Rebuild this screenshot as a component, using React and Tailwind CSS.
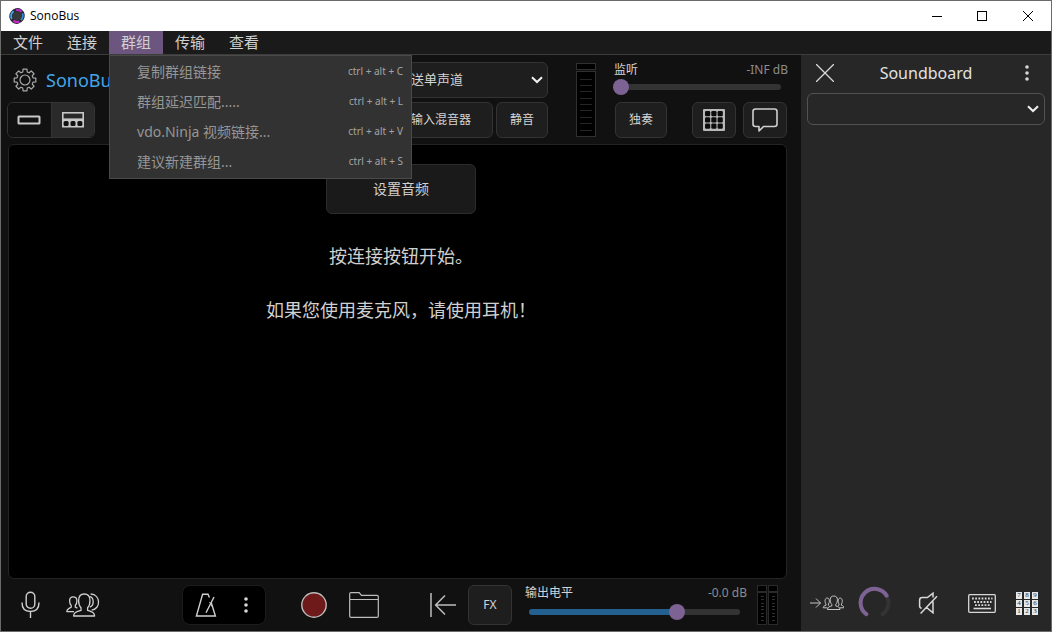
import React, { useState } from 'react';

const FONT = "font-['Noto_Sans','Noto_Sans_CJK_SC',sans-serif]";

const menus = ['文件', '连接', '群组', '传输', '查看'];

const groupItems = [
  { label: '复制群组链接', keys: 'ctrl + alt + C' },
  { label: '群组延迟匹配.....', keys: 'ctrl + alt + L' },
  { label: 'vdo.Ninja 视频链接...', keys: 'ctrl + alt + V' },
  { label: '建议新建群组...', keys: 'ctrl + alt + S' },
];

function Logo() {
  return (
    <svg width="16" height="16" viewBox="0 0 16 16" aria-hidden="true">
      <ellipse cx="8" cy="8" rx="7.6" ry="8" transform="rotate(35 8 8)" fill="#2a2a30" />
      <path d="M7 1.9A6.3 6.3 0 0 1 12.6 3.8" stroke="#b52bc4" strokeWidth="2.2" fill="none" />
      <path d="M13.4 5.4A6 6 0 0 1 11.8 12" stroke="#2f8fd6" strokeWidth="1.8" fill="none" />
      <path d="M10.2 13.6A6.2 6.2 0 0 1 4.4 12.8" stroke="#c22bc4" strokeWidth="2.4" fill="none" />
      <path d="M2.8 11A6.2 6.2 0 0 1 4.6 3.2" stroke="#3aa3e8" strokeWidth="2" fill="none" />
      <circle cx="8" cy="8" r="4.4" fill="#38383b" />
    </svg>
  );
}

function Gear() {
  const pts = [];
  for (let i = 0; i < 8; i++) {
    const a = (i * Math.PI) / 4 - Math.PI / 2;
    [[-0.27, 8.3], [-0.18, 11], [0.18, 11], [0.27, 8.3]].forEach(([d, r]) => {
      pts.push(`${(12 + r * Math.cos(a + d)).toFixed(2)},${(12 + r * Math.sin(a + d)).toFixed(2)}`);
    });
  }
  return (
    <svg width="24" height="24" viewBox="0 0 24 24" fill="none" stroke="#a9a9a9" strokeWidth="1.2" strokeLinejoin="round" aria-hidden="true">
      <polygon points={pts.join(' ')} />
      <circle cx="12" cy="12" r="5" />
    </svg>
  );
}

function Chevron() {
  return (
    <svg width="12" height="8" viewBox="0 0 12 8" fill="none" stroke="#f0f0f0" strokeWidth="2" aria-hidden="true">
      <path d="M1 1.2 6 6 11 1.2" />
    </svg>
  );
}

function Dots() {
  return (
    <svg width="6" height="18" viewBox="0 0 6 18" fill="#d8d8d8" aria-hidden="true">
      <circle cx="3" cy="3" r="1.8" />
      <circle cx="3" cy="9" r="1.8" />
      <circle cx="3" cy="15" r="1.8" />
    </svg>
  );
}

function Meter() {
  return (
    <svg width="20" height="74" viewBox="0 0 20 74" fill="#000" stroke="#303030" role="img" aria-label="输入电平表">
      <rect x="0.5" y="0.5" width="19" height="6" />
      <rect x="0.5" y="8.5" width="19" height="65" />
      {[16, 22, 28, 35, 41, 47, 54, 60, 67].map((y) => (
        <path key={y} d={`M4 ${y + 0.5}H16`} stroke="#262626" />
      ))}
    </svg>
  );
}

function StereoMeter() {
  return (
    <svg width="22" height="40" viewBox="0 0 22 40" fill="#000" stroke="#2a2a2a" role="img" aria-label="输出电平表">
      {[0, 11].map((x) => (
        <g key={x}>
          <rect x={x + 0.5} y="0.5" width="9" height="6" />
          <rect x={x + 0.5} y="7.5" width="9" height="32" />
          {[11, 14, 18, 21, 24, 28, 31, 35].map((y) => (
            <path key={y} d={`M${x + 4} ${y + 0.5}h3`} stroke="#303030" />
          ))}
        </g>
      ))}
    </svg>
  );
}

function Slider({ id, max, value, onChange, className }) {
  const pct = (value / max) * 100;
  return (
    <input
      id={id}
      type="range"
      min="0"
      max={max}
      value={value}
      onChange={(e) => onChange(Number(e.target.value))}
      style={{ '--fill': `${pct}%` }}
      className={`block h-4 appearance-none bg-transparent [&::-webkit-slider-runnable-track]:h-[6px] [&::-webkit-slider-runnable-track]:rounded-full [&::-webkit-slider-runnable-track]:bg-[linear-gradient(to_right,#23608f_var(--fill),#333333_var(--fill))] [&::-webkit-slider-thumb]:-mt-[5px] [&::-webkit-slider-thumb]:h-4 [&::-webkit-slider-thumb]:w-4 [&::-webkit-slider-thumb]:appearance-none [&::-webkit-slider-thumb]:rounded-full [&::-webkit-slider-thumb]:bg-[#7d6294] ${className}`}
    />
  );
}

function TitleBar() {
  return (
    <header className="flex h-[30px] shrink-0 items-center bg-white pl-2 text-black">
      <Logo />
      <h1 className="ml-[5px] font-['Open_Sans',sans-serif] text-[12px] leading-4">SonoBus</h1>
      <div className="ml-auto flex h-full">
        <button aria-label="最小化" className="flex w-[45px] items-center justify-center">
          <svg width="10" height="10" stroke="#000"><path d="M0 5.5H10" /></svg>
        </button>
        <button aria-label="最大化" className="flex w-[46px] items-center justify-center">
          <svg width="10" height="10" fill="none" stroke="#000"><rect x="0.5" y="0.5" width="9" height="9" /></svg>
        </button>
        <button aria-label="关闭" className="flex w-[46px] items-center justify-center">
          <svg width="10" height="10" stroke="#000"><path d="M0 0 10 10M10 0 0 10" /></svg>
        </button>
      </div>
    </header>
  );
}

function MenuBar() {
  return (
    <nav className="flex h-6 shrink-0 border-b border-[#3c3c3c] bg-[#1a1a1a] text-[15px] leading-[23px] text-[#d0d0d0]">
      {menus.map((m) => {
        const open = m === '群组';
        return (
          <div key={m} className="relative">
            <button aria-haspopup="menu" aria-expanded={open} className={`block h-[23px] px-3 ${open ? 'bg-[#6c5680]' : ''}`}>
              {m}
            </button>
            {open && (
              <ul role="menu" className="absolute top-6 left-0 z-10 w-[303px] border border-[#4a4a4a] bg-[#323232] pb-[2px] text-[#969696]">
                {groupItems.map((it) => (
                  <li key={it.label} role="none">
                    <button role="menuitem" className="flex h-[30px] w-full items-center justify-between pr-2 pl-[27px] text-[14px]">
                      <span>{it.label}</span>
                      <span className="text-[10px] text-[#a4a4a4]">{it.keys}</span>
                    </button>
                  </li>
                ))}
              </ul>
            )}
          </div>
        );
      })}
    </nav>
  );
}

const box = 'flex items-center justify-center rounded-md border border-[#333333] bg-[#1e1e1e] text-[#d4d4d4]';

function TopControls() {
  const [monitor, setMonitor] = useState(0);
  return (
    <section className="flex shrink-0 items-start pt-[7px] pr-[13px] pb-[6px] pl-[6px]">
      <div className="flex flex-col gap-1">
        <div className="flex h-9 items-center gap-[9px] pl-[6px]">
          <button aria-label="设置"><Gear /></button>
          <span className="text-[18px] leading-[26px] text-[#43a5e8]">SonoBus</span>
        </div>
        <div className="flex h-9 w-[88px] overflow-hidden rounded-md border border-[#333333]">
          <button aria-label="精简视图" className="flex flex-1 items-center justify-center border-r border-[#333333] bg-[#111111]">
            <svg width="24" height="10" fill="none" stroke="#c8c8c8" strokeWidth="2"><rect x="1.5" y="1.5" width="21" height="7" rx="0.5" /></svg>
          </button>
          <button aria-label="完整视图" className="flex flex-1 items-center justify-center bg-[#2a2a2a]">
            <svg width="24" height="18" fill="none" stroke="#c8c8c8" strokeWidth="1.6">
              <rect x="1.8" y="1.8" width="20.4" height="6.4" />
              <rect x="1" y="9" width="22" height="7.5" fill="#c8c8c8" stroke="none" />
              <g fill="#111111" stroke="none">
                <rect x="2.6" y="10" width="5" height="5" rx="1.5" />
                <rect x="9.5" y="10" width="5" height="5" rx="1.5" />
                <rect x="16.4" y="10" width="5" height="5" rx="1.5" />
              </g>
            </svg>
          </button>
        </div>
      </div>

      <div className="ml-auto flex w-[159px] flex-col gap-1">
        <div className="relative">
          <select aria-label="发送声道" className="block h-9 w-full appearance-none rounded-md border border-[#333333] bg-[#1e1e1e] pl-2 text-[13px] text-[#d4d4d4]">
            <option>发送单声道</option>
          </select>
          <span className="pointer-events-none absolute inset-y-0 right-[5px] flex items-center"><Chevron /></span>
        </div>
        <div className="flex gap-[3px]">
          <button className={`${box} h-9 flex-1 text-[12px]`}>输入混音器</button>
          <button className={`${box} h-9 w-[52px] text-[12px]`}>静音</button>
        </div>
      </div>

      <div className="ml-7 pt-px"><Meter /></div>

      <div className="ml-[17px] flex w-[175px] flex-col">
        <div className="flex h-4 items-center justify-between pl-px">
          <label htmlFor="monitor" className="text-[12px] leading-4 text-[#d4d4d4]">监听</label>
          <output htmlFor="monitor" className="text-[12px] leading-4 text-[#8c8c8c]">-INF dB</output>
        </div>
        <Slider id="monitor" max={100} value={monitor} onChange={setMonitor} className="mt-px w-[168px]" />
        <div className="mt-[7px] flex gap-[7px] pr-px pl-[2px]">
          <button className={`${box} h-9 w-[52px] text-[12px]`}>独奏</button>
          <button aria-label="延迟网格" className={`${box} ml-auto h-9 w-11`}>
            <svg width="22" height="22">
              <rect width="22" height="22" rx="1" fill="#b8b8b8" />
              {[2, 8.3, 14.6].map((y) => [2, 8.3, 14.6].map((x) => (
                <rect key={`${x}-${y}`} x={x} y={y} width="5.2" height="5.2" rx="1.2" fill="#0c0c0c" />
              )))}
            </svg>
          </button>
          <button aria-label="聊天" className={`${box} h-9 w-11`}>
            <svg width="26" height="24" viewBox="0 0 26 24" fill="none" stroke="#cfcfcf" strokeWidth="1.6" strokeLinejoin="round">
              <path d="M3.5 1H22.5Q25 1 25 3.5V16Q25 18.5 22.5 18.5H11.5L7 23V18.5H3.5Q1 18.5 1 16V3.5Q1 1 3.5 1Z" />
            </svg>
          </button>
        </div>
      </div>
    </section>
  );
}

function Stage() {
  return (
    <main className="mr-[14px] ml-[7px] flex flex-1 flex-col items-center rounded-md border border-[#242424] bg-black pt-[19px] pl-[7px] text-[18px] leading-6 text-[#d0d0d0]">
      <button className="h-[50px] w-[150px] rounded-md border border-[#2c2c2c] bg-[#1a1a1a] text-[14px]">设置音频</button>
      <p className="mt-[30px]">按连接按钮开始。</p>
      <p className="mt-[30px]">如果您使用麦克风，请使用耳机！</p>
    </main>
  );
}

function BottomBar() {
  const [level, setLevel] = useState(72);
  return (
    <footer className="flex h-[52px] shrink-0 items-center pr-[22px] pl-5">
      <button aria-label="麦克风">
        <svg width="19" height="28" viewBox="0 0 19 28" fill="none" stroke="#cfcfcf" strokeWidth="1.4">
          <rect x="5.2" y="1.2" width="8.6" height="16" rx="4.3" />
          <path d="M1 11.5C1 17.5 4.5 20.5 9.5 20.5S18 17.5 18 11.5M9.5 20.5V27" />
        </svg>
      </button>
      <button aria-label="监听群组" className="ml-[26px]">
        <svg width="34" height="24" viewBox="0 0 34 24" fill="none" stroke="#cfcfcf" strokeWidth="1.3" strokeLinejoin="round">
          <path d="M7.6 23H28.6C28.6 19.2 25.5 18.6 21.6 17.4V14.8C23.4 13 24 11 24 7.5C24 3 21.8 1 18.3 1S12.6 3 12.6 7.5C12.6 11 13.2 13 15 14.8V17.4C11 18.6 7.6 19.2 7.6 23Z" />
          <path d="M11.4 15.2 9.3 14.2V12.6C10.4 11.6 10.9 10 10.9 7.8C10.9 5 9.4 3.8 7.2 3.8S3.6 5 3.6 7.8C3.6 10 4 11.6 5.2 12.6V14.2L3 15.4C1.6 16.2 .8 17 .8 18.6H8" />
          <path d="M23.8 3.6C28 4.4 28.6 12.4 23.8 14.2M24.6 1C35 1.6 35 16 25.6 17.2" />
        </svg>
      </button>
      <div className="ml-[82px] flex h-10 w-[84px] items-center justify-between rounded-lg border border-[#1c1c1c] bg-black pr-4 pl-3">
        <button aria-label="节拍器">
          <svg width="22" height="24" viewBox="0 0 22 24" fill="none" stroke="#cfcfcf" strokeWidth="1.4">
            <path d="M16.2 9.5 20.4 23H1.4L7.6 1.2H13L14.4 4.6M11 19.8 19 4" />
            <path d="M14.5 9 17.5 14" strokeWidth="1" />
          </svg>
        </button>
        <button aria-label="节拍器选项"><Dots /></button>
      </div>
      <button aria-label="录音" className="ml-[35px]">
        <svg width="26" height="26"><circle cx="13" cy="13" r="12.2" fill="#6e1a1a" stroke="#bdbdbd" strokeWidth="1.4" /></svg>
      </button>
      <button aria-label="打开文件夹" className="ml-[22px]">
        <svg width="30" height="26" fill="none" stroke="#bdbdbd" strokeWidth="1.2"><path d="M.7 7.5V2Q.7.7 2 .7H10.2L12.4 3.3H28Q29.3 3.3 29.3 4.6V24.2Q29.3 25.3 28 25.3H2Q.7 25.3.7 24.2V7.5H29.3" /></svg>
      </button>
      <button aria-label="回到开头" className="ml-auto">
        <svg width="28" height="24" fill="none" stroke="#bdbdbd" strokeWidth="1.5"><path d="M2 0V24M27 12H7M16 2.5 6.6 12 16 21.5" /></svg>
      </button>
      <button className={`${box} ml-[11px] h-10 w-11 text-[12px]`}>FX</button>
      <div className="ml-[13px] flex w-[222px] flex-col pb-[5px]">
        <div className="flex h-4 items-center justify-between">
          <label htmlFor="output" className="text-[12px] leading-4 text-[#d4d4d4]">输出电平</label>
          <output htmlFor="output" className="text-[12px] leading-4 text-[#8c8c8c]">-0.0 dB</output>
        </div>
        <Slider id="output" max={100} value={level} onChange={setLevel} className="mt-[3px] ml-1 w-[211px]" />
      </div>
      <div className="ml-[10px]"><StereoMeter /></div>
    </footer>
  );
}

function Soundboard() {
  return (
    <aside className="flex w-[250px] shrink-0 flex-col bg-[#272727] px-[6px]">
      <div className="mb-[2px] flex h-9 items-center pr-[15px] pl-[9px]">
        <button aria-label="关闭音效板">
          <svg width="18" height="18" stroke="#d8d8d8" strokeWidth="1.3"><path d="M0 0 18 18M18 0 0 18" /></svg>
        </button>
        <h2 className="flex-1 pr-[6px] text-center text-[16px] text-[#e2e2e2]">Soundboard</h2>
        <button aria-label="音效板选项"><Dots /></button>
      </div>
      <div className="relative">
        <select aria-label="选择音效板" className="block h-8 w-full appearance-none rounded-md border border-[#525252] bg-[#272727] px-2 text-[13px] text-[#d4d4d4]" />
        <span className="pointer-events-none absolute inset-y-0 right-[6px] flex items-center"><Chevron /></span>
      </div>
      <div className="mt-auto flex h-14 items-center pr-[7px] pl-[3px]">
        <button aria-label="发送到群组">
          <svg width="34" height="16" viewBox="0 0 34 16" fill="none" stroke="#c4c4c4" strokeWidth="1">
            <path d="M0 8H10.5M6 3.5 10.5 8 6 12.5" />
            <path d="M17.5 14.5H30C30 12 28 11.6 25.8 11V9.4C27 8 27.4 6.6 27.4 4.8C27.4 2 26 1 23.8 1S20.2 2 20.2 4.8C20.2 6.6 20.6 8 21.8 9.4V11C19.4 11.6 17.5 12 17.5 14.5Z" />
            <path d="M19.2 10.8 18.4 10.2V9C20 7 19.6 3 17.2 3S14.4 7 16 9V10.2C14.4 10.8 13.2 11.2 13.2 12.8H17.4M28.2 10.8 29 10.2V9C27.6 7 28 3 30.2 3S33 7 31.4 9V10.2C33 10.8 33.8 11.2 33.8 12.8H30" />
          </svg>
        </button>
        <button role="slider" aria-label="音效板音量" aria-valuemin="0" aria-valuemax="100" aria-valuenow="72" className="ml-[13px]">
          <svg width="34" height="34" viewBox="0 0 34 34" fill="none" strokeWidth="4" strokeLinecap="round">
            <path d="M9.3 28.1A14 14 0 1 1 25.7 28.1" stroke="#333333" />
            <path d="M9.3 28.1A14 14 0 1 1 29.6 9.6" stroke="#7d6294" />
          </svg>
        </button>
        <button aria-label="静音音效板" className="ml-[27px]">
          <svg width="20" height="22" viewBox="0 0 20 22" fill="none" stroke="#d8d8d8" strokeWidth="1.5">
            <path d="M15 5.6V1.2L9.4 5.6H4.2Q1.6 5.6 1.6 8.2V14Q1.6 16 3.6 16.2M8 16.2H9.4L15 20.8V9.6M19 4.2 2.6 21.4" />
          </svg>
        </button>
        <button aria-label="键盘" className="ml-[30px]">
          <svg width="28" height="19" viewBox="0 0 28 19" fill="none" stroke="#d8d8d8">
            <rect x="0.7" y="0.7" width="26.6" height="17.6" rx="1" strokeWidth="1.3" />
            <path d="M4 4.5H24.5M6 8H23.5M7 11.2H22" strokeWidth="1.8" strokeDasharray="1.8 1.4" />
            <path d="M5.5 14.5H23" strokeWidth="1.6" />
          </svg>
        </button>
        <button aria-label="数字键盘" className="ml-auto grid grid-cols-3 gap-x-[2px] gap-y-px font-['Liberation_Serif',serif] text-[7px] leading-[7px] text-[#333333]">
          {[7, 8, 9, 4, 5, 6, 1, 2, 3].map((n) => (
            <span key={n} className="flex h-[7px] w-[6px] items-center justify-center bg-[#e8e8e8]">{n}</span>
          ))}
        </button>
      </div>
    </aside>
  );
}

export default function App() {
  return (
    <div className={`flex h-screen flex-col border border-[#6b6b6b] bg-[#111111] ${FONT}`}>
      <TitleBar />
      <MenuBar />
      <div className="flex min-h-0 flex-1">
        <div className="flex min-w-0 flex-1 flex-col">
          <TopControls />
          <Stage />
          <BottomBar />
        </div>
        <Soundboard />
      </div>
    </div>
  );
}
